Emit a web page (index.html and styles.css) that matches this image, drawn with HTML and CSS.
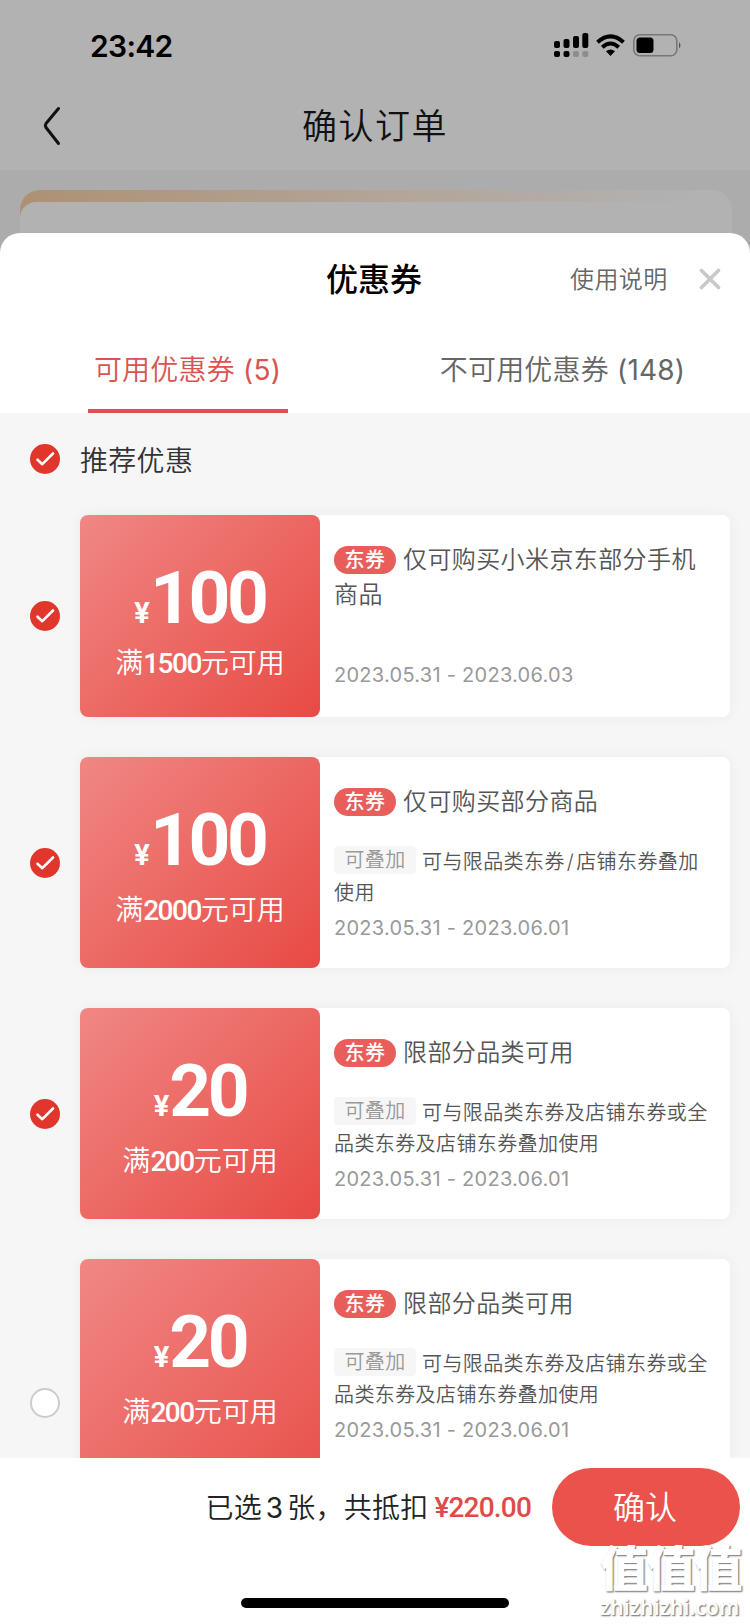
FILE: index.html
```
<!DOCTYPE html>
<html lang="zh-CN">
<head>
<meta charset="UTF-8">
<meta name="viewport" content="width=device-width, initial-scale=1.0">
<title>确认订单</title>
<link rel="stylesheet" href="styles.css">
</head>
<body>

<div class="page">
    <div class="status-bar">
        <span class="time">23:42</span>
        <svg class="status-icons" width="130" height="28" viewBox="0 0 130 28">
            <rect x="1" y="9" width="6" height="7" rx="2"/>
            <rect x="10.500" y="7" width="6" height="9" rx="2"/>
            <rect x="20" y="4" width="6" height="12" rx="2"/>
            <rect x="29.300" y="1" width="6" height="15" rx="2"/>
            <rect x="1" y="19" width="6" height="6" rx="2"/>
            <rect x="10.500" y="19" width="6" height="6" rx="2"/>
            <rect x="20" y="19" width="6" height="6" rx="2" fill="#8d8d8d"/>
            <rect x="29.300" y="19" width="6" height="6" rx="2" fill="#8d8d8d"/>
            <path d="M44.500 10.200 Q57.500 -1.500 70.500 10.200" fill="none" stroke="#000" stroke-width="4"/>
            <path d="M49.300 15.200 Q57.500 7.800 65.700 15.200" fill="none" stroke="#000" stroke-width="4"/>
            <path d="M57.500 24 L53 19.300 Q57.500 15.600 62 19.300 Z"/>
            <rect x="80.800" y="2.800" width="43" height="21" rx="6" fill="none" stroke="#777" stroke-width="1.600"/>
            <rect x="83.500" y="5.500" width="17" height="15.500" rx="3.500"/>
            <path d="M126 10 q3 3.300 0 6.600 z" fill="#555"/>
        </svg>
    </div>
    <div class="nav">
        <svg class="back" width="20" height="42" viewBox="0 0 20 42"><path d="M16.500 3.500 L4 18.500 Q2.800 20.500 4 22.500 L16.500 38.500" fill="none" stroke="#111" stroke-width="3" stroke-linecap="round" stroke-linejoin="round"/></svg>
        <span class="nav-title">确认订单</span>
    </div>
    <div class="order">
        <div class="order-card"><div class="order-inner"></div></div>
    </div>

    <div class="sheet">
        <div class="sheet-header">
            <span class="sheet-title">优惠券</span>
            <span class="help">使用说明</span>
            <svg class="close" width="22" height="22" viewBox="0 0 22 22"><path d="M2.500 2.500 L19.500 19.500 M19.500 2.500 L2.500 19.500" stroke="#c8c8c8" stroke-width="3.600" stroke-linecap="round"/></svg>
        </div>
        <div class="tabs">
            <div class="tab active"><span>可用优惠券 <i class="num">(5)</i></span></div>
            <div class="tab"><span>不可用优惠券 <i class="num">(148)</i></span></div>
        </div>

        <div class="list">
            <div class="recommend">
                <svg class="check" width="30" height="30" viewBox="0 0 30 30"><circle cx="15" cy="15" r="15" fill="#e1362b"/><path d="M7.500 15.700 L12.300 20.200 L23 9.500" fill="none" stroke="#fff" stroke-width="2.600" stroke-linecap="round" stroke-linejoin="round"/></svg>
                <span class="recommend-text">推荐优惠</span>
            </div>

            <div class="row">
                <svg class="check" width="30" height="30" viewBox="0 0 30 30"><circle cx="15" cy="15" r="15" fill="#e1362b"/><path d="M7.500 15.700 L12.300 20.200 L23 9.500" fill="none" stroke="#fff" stroke-width="2.600" stroke-linecap="round" stroke-linejoin="round"/></svg>
                <div class="coupon short">
                    <div class="value">
                        <div class="amount"><small>¥</small>100</div>
                        <div class="limit">满<b>1500</b>元可用</div>
                    </div>
                    <div class="info">
                        <div class="name"><span class="tag">东券</span>仅可购买小米京东部分手机商品</div>
                        <div class="date">2023.05.31 - 2023.06.03</div>
                    </div>
                </div>
            </div>

            <div class="row">
                <svg class="check" width="30" height="30" viewBox="0 0 30 30"><circle cx="15" cy="15" r="15" fill="#e1362b"/><path d="M7.500 15.700 L12.300 20.200 L23 9.500" fill="none" stroke="#fff" stroke-width="2.600" stroke-linecap="round" stroke-linejoin="round"/></svg>
                <div class="coupon">
                    <div class="value">
                        <div class="amount"><small>¥</small>100</div>
                        <div class="limit">满<b>2000</b>元可用</div>
                    </div>
                    <div class="info">
                        <div class="name"><span class="tag">东券</span>仅可购买部分商品</div>
                        <div class="desc"><span class="stack">可叠加</span>可与限品类东券<span class="slash">/</span>店铺东券叠加使用</div>
                        <div class="date">2023.05.31 - 2023.06.01</div>
                    </div>
                </div>
            </div>

            <div class="row">
                <svg class="check" width="30" height="30" viewBox="0 0 30 30"><circle cx="15" cy="15" r="15" fill="#e1362b"/><path d="M7.500 15.700 L12.300 20.200 L23 9.500" fill="none" stroke="#fff" stroke-width="2.600" stroke-linecap="round" stroke-linejoin="round"/></svg>
                <div class="coupon">
                    <div class="value">
                        <div class="amount"><small>¥</small>20</div>
                        <div class="limit">满<b>200</b>元可用</div>
                    </div>
                    <div class="info">
                        <div class="name"><span class="tag">东券</span>限部分品类可用</div>
                        <div class="desc"><span class="stack">可叠加</span>可与限品类东券及店铺东券或全品类东券及店铺东券叠加使用</div>
                        <div class="date">2023.05.31 - 2023.06.01</div>
                    </div>
                </div>
            </div>

            <div class="row">
                <span class="check empty"></span>
                <div class="coupon tall">
                    <div class="value">
                        <div class="amount"><small>¥</small>20</div>
                        <div class="limit">满<b>200</b>元可用</div>
                    </div>
                    <div class="info">
                        <div class="name"><span class="tag">东券</span>限部分品类可用</div>
                        <div class="desc"><span class="stack">可叠加</span>可与限品类东券及店铺东券或全品类东券及店铺东券叠加使用</div>
                        <div class="date">2023.05.31 - 2023.06.01</div>
                    </div>
                </div>
            </div>
        </div>

        <div class="footer">
            <div class="footer-row">
                <span class="summary">已选<i class="num">3</i>张，共抵扣</span>
                <span class="total">¥220.00</span>
                <button class="confirm">确认</button>
            </div>
            <div class="home-bar"></div>
            <div class="watermark">
                <div class="wm-big">值值值</div>
                <div class="wm-small">zhizhizhi.com</div>
            </div>
        </div>
    </div>
</div>

</body>
</html>
```
FILE: styles.css
```
* {
    box-sizing: border-box;
}
body {
    margin: 0;
    font-family: Inter, "Noto Sans CJK SC", sans-serif;
    font-weight: 350;
    color: #333;
    background: #acacac;
}
.page {
    width: 750px;
    height: 1624px;
    overflow: hidden;
    display: flex;
    flex-direction: column;
}
.num {
    font-style: normal;
    font-weight: 400;
}
.status-bar {
    height: 84px;
    background: #b2b2b2;
    display: flex;
    justify-content: space-between;
    padding: 0 67px 0 90px;
}
.time {
    font-size: 30px;
    letter-spacing: -0.7px;
    line-height: 92px;
    font-weight: 600;
    color: #000;
}
.status-icons {
    margin-top: 32px;
}
.nav {
    height: 86px;
    background: #b2b2b2;
    display: grid;
    grid-template-columns: 100px 1fr 100px;
}
.back {
    margin: 21px 0 0 42px;
}
.nav-title {
    text-align: center;
    font-size: 35px;
    letter-spacing: 1.5px;
    line-height: 84px;
    color: #111;
}
.order {
    height: 63px;
    padding: 20px 18px 0 20px;
}
.order-card {
    height: 43px;
    padding-top: 12px;
    border-radius: 20px 20px 0 0;
    background: linear-gradient(90deg, #ad9174, #b3a497 50%, #b2b2b2 95%);
}
.order-inner {
    height: 31px;
    border-radius: 16px 16px 0 0;
    background: #b2b2b2;
}

.sheet {
    flex: 1;
    min-height: 0;
    background: #fff;
    border-radius: 20px 20px 0 0;
    display: flex;
    flex-direction: column;
}
.sheet-header {
    height: 92px;
    display: grid;
    grid-template-columns: 250px 1fr 154px 96px;
    align-items: center;
}
.sheet-title {
    grid-column: 2;
    padding: 0 0 4px 76px;
    font-size: 32px;
    font-weight: 500;
    color: #000;
}
.help {
    padding: 0 0 4px 70px;
    white-space: nowrap;
    font-size: 24px;
    letter-spacing: 0.4px;
    color: #666;
}
.close {
    margin-left: 45px;
}
.tabs {
    height: 88px;
    display: grid;
    grid-template-columns: 1fr 1fr;
    font-size: 28px;
    letter-spacing: 0.2px;
    color: #666;
}
.tab {
    display: flex;
    justify-content: center;
}
.tab span {
    line-height: 90px;
    white-space: nowrap;
}
.tab.active span {
    width: 200px;
    height: 88px;
    text-align: center;
    border-bottom: 4px solid #d9534f;
    color: #d9534f;
}

.list {
    flex: 1;
    min-height: 0;
    overflow: hidden;
    background: #f6f6f6;
}
.recommend {
    height: 102px;
    padding: 0 0 10px 30px;
    display: flex;
    gap: 20px;
    align-items: center;
    font-size: 28px;
    letter-spacing: 0.3px;
}
.recommend-text {
    padding-bottom: 1px;
}
.row {
    display: grid;
    grid-template-columns: 50px 650px;
    align-items: center;
    padding-left: 30px;
    margin-bottom: 40px;
}
.check {
    display: block;
    width: 30px;
    height: 30px;
}
.check.empty {
    border: 2px solid #ccc;
    border-radius: 50%;
    background: #fff;
}
.coupon {
    display: flex;
    height: 211px;
    background: #fff;
    border-radius: 8px;
    box-shadow: 0 0 14px rgba(0, 0, 0, 0.05);
}
.coupon.short {
    height: 202px;
}
.coupon.tall {
    height: 288px;
}
.value {
    width: 240px;
    border-radius: 8px;
    background: linear-gradient(135deg, #f08784, #e84a44);
    color: #fff;
    text-align: center;
}
.amount {
    height: 129px;
    padding-top: 47px;
    font-family: Roboto, sans-serif;
    font-size: 73px;
    font-weight: 700;
    line-height: 72px;
    letter-spacing: -3.3px;
}
.amount small {
    font-size: 29px;
    letter-spacing: 0;
}
.limit {
    font-size: 28px;
    line-height: 48px;
}
.short .limit {
    margin-top: -5px;
}
.limit b {
    font-family: Roboto, sans-serif;
    font-weight: 500;
    letter-spacing: -1.5px;
}
.info {
    flex: 1;
    padding: 27px 20px 0 14px;
}
.name {
    font-size: 24px;
    letter-spacing: 0.4px;
    line-height: 35px;
    color: #555;
}
.tag {
    display: inline-block;
    width: 62px;
    height: 28px;
    margin-right: 7px;
    border-radius: 14px;
    background: #e85e5b;
    color: #fff;
    font-size: 20px;
    font-weight: 500;
    line-height: 28px;
    text-align: center;
    vertical-align: 1px;
}
.desc {
    margin-top: 27px;
    font-size: 20px;
    letter-spacing: 0.4px;
    line-height: 31px;
    color: #555;
}
.slash {
    padding: 0 2px;
}
.stack {
    display: inline-block;
    width: 82px;
    height: 28px;
    margin-right: 6px;
    border-radius: 4px;
    background: #f6f6f6;
    color: #999;
    line-height: 28px;
    text-align: center;
    vertical-align: 2px;
}
.date {
    font-size: 20px;
    font-weight: 400;
    letter-spacing: 0.27px;
    line-height: 38px;
    color: #999;
}
.short .date {
    margin-top: 44px;
}

.footer {
    position: relative;
    height: 166px;
    background: #fff;
}
.footer-row {
    height: 98px;
    padding-right: 10px;
    display: flex;
    align-items: center;
    justify-content: flex-end;
}
.summary {
    padding-bottom: 2px;
    font-size: 28px;
    letter-spacing: 0.2px;
    color: #222;
}
.summary .num {
    padding: 0 4px;
}
.total {
    margin: 0 21px 0 6px;
    font-family: Roboto, sans-serif;
    font-size: 28px;
    font-weight: 500;
    letter-spacing: -0.8px;
    color: #e04a48;
}
.confirm {
    width: 188px;
    height: 78px;
    padding: 0 2px 4px 0;
    border: none;
    border-radius: 39px;
    background: #eb524b;
    color: #fff;
    font-family: inherit;
    font-weight: inherit;
    font-size: 32px;
}
.home-bar {
    width: 268px;
    height: 10px;
    margin: 42px auto 0;
    border-radius: 5px;
    background: #000;
}
.watermark {
    position: absolute;
    right: 6px;
    top: 82px;
    width: 144px;
    color: #fff;
    text-shadow: 1px 1px 1px #888, 1px 1px 2px #999;
}
.wm-big {
    font-size: 48px;
    letter-spacing: -0.7px;
    line-height: 57px;
    font-weight: 900;
}
.wm-small {
    font-family: "Open Sans", sans-serif;
    font-size: 21px;
    font-weight: 600;
    line-height: 20px;
    letter-spacing: 0.2px;
}
```
